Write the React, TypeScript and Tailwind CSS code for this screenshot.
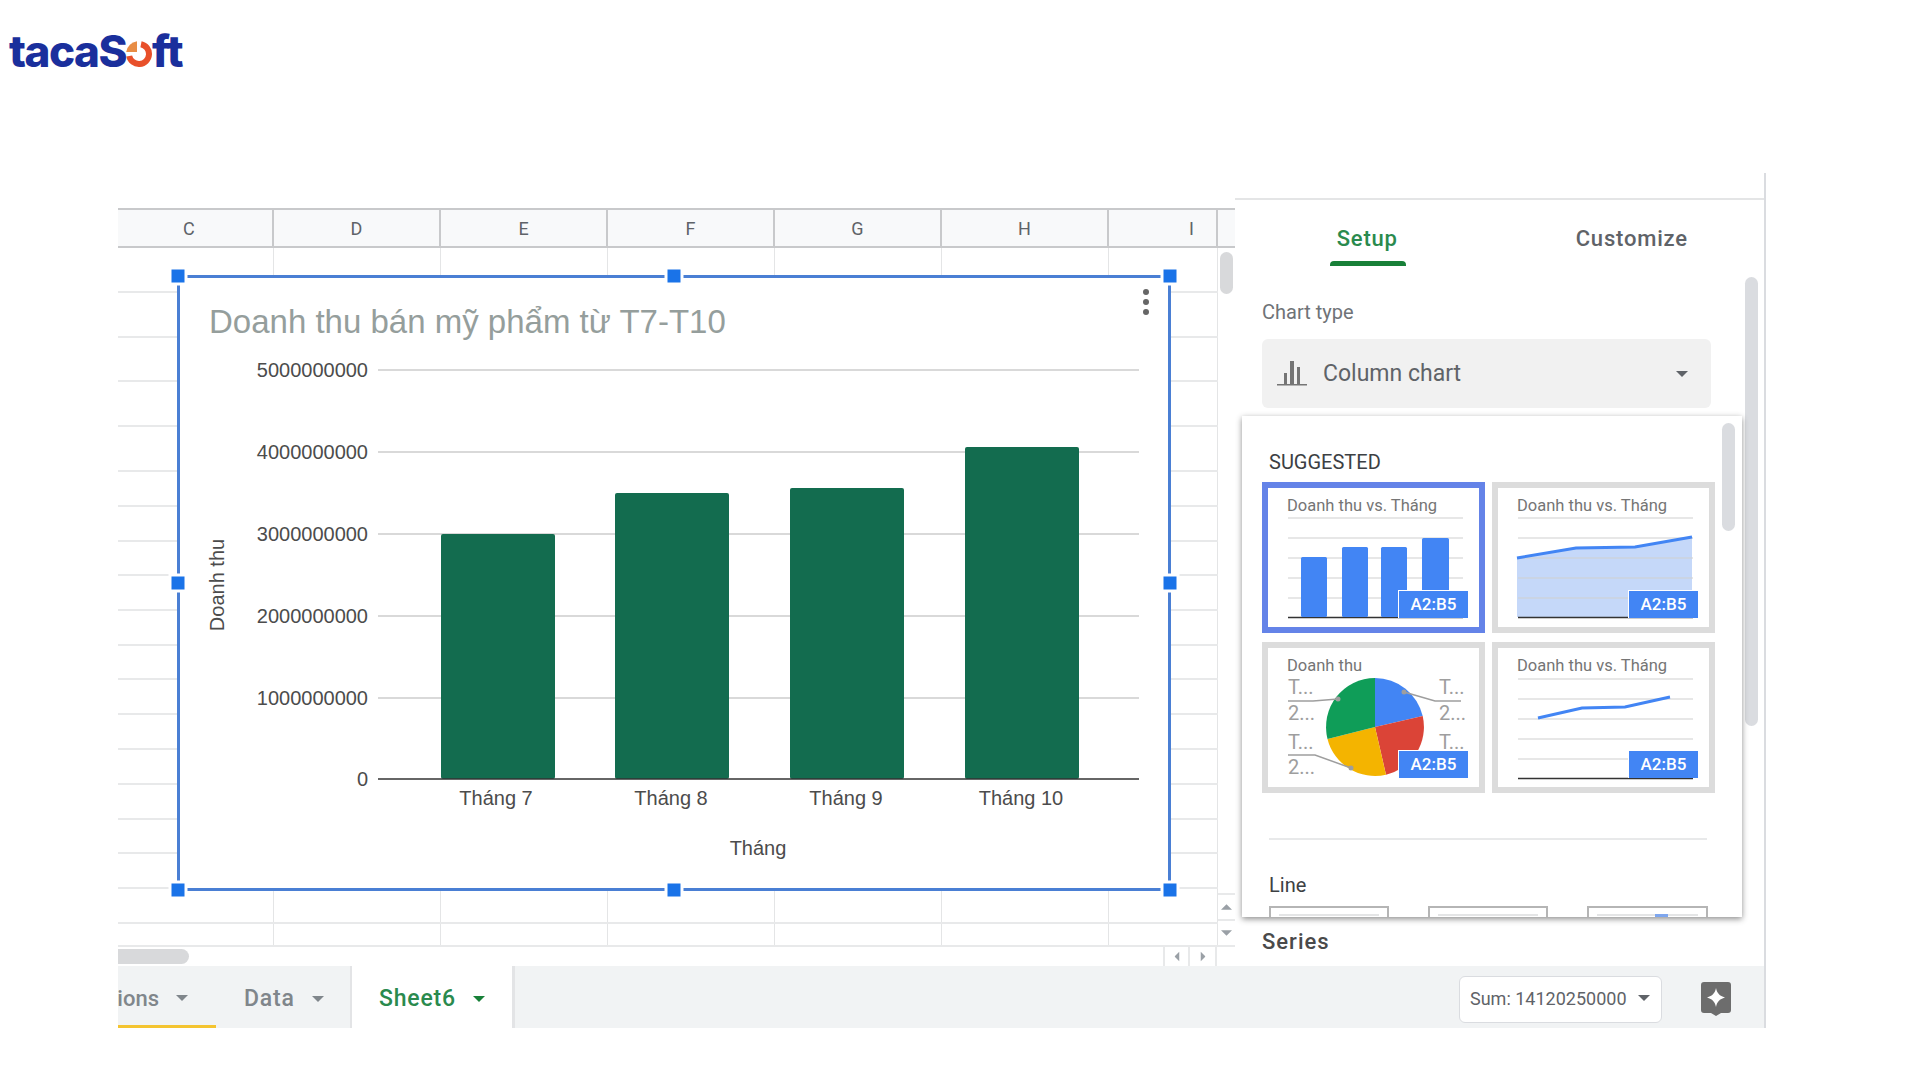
const columns = [
  { label: 'C', className: 'pl-[65px]' },
  { label: 'D', className: 'justify-center' },
  { label: 'E', className: 'justify-center' },
  { label: 'F', className: 'justify-center' },
  { label: 'G', className: 'justify-center' },
  { label: 'H', className: 'justify-center' },
  { label: 'I', className: 'pl-[80px]' },
];

const rowHeights = [
  'h-[45px]', 'h-[45px]', 'h-[44px]', 'h-[45px]', 'h-[45px]',
  'h-[35px]', 'h-[35px]', 'h-[34px]', 'h-[35px]', 'h-[35px]', 'h-[34px]', 'h-[35px]',
  'h-[35px]', 'h-[35px]', 'h-[35px]', 'h-[34px]', 'h-[35px]', 'h-[35px]', 'h-[23px]',
];

const gridCols = 'grid grid-cols-[156px_167px_167px_167px_167px_167px_109px]';

const handles = [
  'left-0 top-0', 'left-1/2 top-0', 'left-full top-0',
  'left-0 top-1/2', 'left-full top-1/2',
  'left-0 top-full', 'left-1/2 top-full', 'left-full top-full',
];

const axisTicks = [
  { y: 370, label: '5000000000' },
  { y: 452, label: '4000000000' },
  { y: 534, label: '3000000000' },
  { y: 616, label: '2000000000' },
  { y: 698, label: '1000000000' },
];

const bars = [
  { x: 441, top: 534, center: 496, label: 'Tháng 7' },
  { x: 615, top: 493, center: 671, label: 'Tháng 8' },
  { x: 790, top: 488, center: 846, label: 'Tháng 9' },
  { x: 965, top: 447, center: 1021, label: 'Tháng 10' },
];

function Caret({ className }: { className: string }) {
  return (
    <svg viewBox="0 0 12 6" className={className}>
      <path d="M0 0h12L6 6z" fill="currentColor" />
    </svg>
  );
}

function Logo() {
  return (
    <div className="flex items-baseline pl-[9px] pt-[21px] h-[173px] font-['Inter',sans-serif] font-extrabold text-[44px] leading-[60px] tracking-[-1.5px] text-[#1a2f9c]">
      <span>tacaS</span>
      <svg viewBox="0 0 26 26" className="w-[26px] h-[26px] shrink-0">
        <path d="M11 11V0.2A13 13 0 0 0 0.2 11Z" fill="#e88d45" />
        <path d="M15 3.2A10 10 0 1 1 3.2 15" fill="none" stroke="#e8502a" strokeWidth="6" />
      </svg>
      <span>ft</span>
    </div>
  );
}

function SalesChart() {
  return (
    <div className="absolute left-[59px] top-[27px] w-[994px] h-[616px] bg-white">
      <div className="absolute inset-0 border-[3px] border-[#4a7fd4]" />
      <svg viewBox="177 275 994 616" className="absolute inset-0 w-[994px] h-[616px] font-['Liberation_Sans',sans-serif]">
        <text x="209" y="333" fontSize="33" fill="#959e9c">Doanh thu bán mỹ phẩm từ T7-T10</text>
        {axisTicks.map((tick) => (
          <g key={tick.y}>
            <line x1="378" x2="1139" y1={tick.y} y2={tick.y} stroke="#cccccc" strokeWidth="1.5" />
            <text x="368" y={tick.y + 7} fontSize="20" fill="#4c4c4c" textAnchor="end">{tick.label}</text>
          </g>
        ))}
        {bars.map((bar) => (
          <g key={bar.label}>
            <rect x={bar.x} y={bar.top} width="114" height={779 - bar.top} rx="2" fill="#136c4f" />
            <text x={bar.center} y="805" fontSize="20" fill="#4c4c4c" textAnchor="middle">{bar.label}</text>
          </g>
        ))}
        <line x1="378" x2="1139" y1="779" y2="779" stroke="#333333" strokeWidth="1.5" />
        <text x="368" y="786" fontSize="20" fill="#4c4c4c" textAnchor="end">0</text>
        <text x="758" y="855" fontSize="20" fill="#4c4c4c" textAnchor="middle">Tháng</text>
        <text x="224" y="585" fontSize="20" fill="#4c4c4c" textAnchor="middle" transform="rotate(-90 224 585)">Doanh thu</text>
        <circle cx="1146" cy="292" r="3" fill="#666666" />
        <circle cx="1146" cy="302" r="3" fill="#666666" />
        <circle cx="1146" cy="312" r="3" fill="#666666" />
      </svg>
      <div className="absolute inset-[1px]">
        {handles.map((pos) => (
          <div key={pos} className={`absolute ${pos} -translate-x-1/2 -translate-y-1/2 w-[13px] h-[13px] bg-[#1a73e8] ring-[3px] ring-white`} />
        ))}
      </div>
    </div>
  );
}

function Sheet() {
  return (
    <div className="w-[1117px] pt-[35px] flex flex-col">
      <div className="flex h-[40px] border-y-2 border-[#c8c9cb] bg-[#f8f9fa] text-[18px] text-[#5f6368]">
        <div className={`${gridCols} w-[1100px]`}>
          {columns.map((col) => (
            <div key={col.label} className={`flex items-center border-r-2 border-[#c8c9cb] ${col.className}`}>
              {col.label}
            </div>
          ))}
        </div>
      </div>
      <div className="flex">
        <div className="relative w-[1100px]">
          {rowHeights.map((height, i) => (
            <div key={i} className={`${gridCols} ${height} border-b-2 border-[#e8e9ea]`}>
              {columns.map((col) => (
                <div key={col.label} className="border-r border-[#e4e5e6]" />
              ))}
            </div>
          ))}
          <SalesChart />
        </div>
        <div className="w-[17px] flex flex-col pt-[4px]">
          <div className="mx-[2px] h-[42px] rounded-full bg-[#d8d9db]" />
          <div className="flex-1" />
          <div className="h-[28px] flex items-center justify-center border-y-2 border-[#e8e9ea] text-[#9aa0a6]">
            <Caret className="w-[11px] h-[6px] rotate-180" />
          </div>
          <div className="h-[26px] flex items-center justify-center border-b-2 border-[#e8e9ea] text-[#9aa0a6]">
            <Caret className="w-[11px] h-[6px]" />
          </div>
        </div>
      </div>
      <div className="flex h-[19px] items-center">
        <div className="w-[71px] h-[15px] rounded-r-full bg-[#d8d9db]" />
        <div className="flex-1" />
        <div className="h-full w-[27px] flex items-center justify-center border-x-2 border-[#e8e9ea] text-[#9aa0a6]">
          <Caret className="w-[10px] h-[5px] rotate-90" />
        </div>
        <div className="h-full w-[27px] flex items-center justify-center border-r-2 border-[#e8e9ea] text-[#9aa0a6]">
          <Caret className="w-[10px] h-[5px] -rotate-90" />
        </div>
        <div className="w-[18px]" />
      </div>
    </div>
  );
}

function RangeBadge() {
  return (
    <div className="absolute right-[11px] bottom-[9px] w-[70px] h-[28px] flex items-center justify-center bg-[#4285f4] border-l border-t border-white text-[17px] font-medium text-white">
      A2:B5
    </div>
  );
}

function Thumb({ title, selected, children }: { title: string; selected?: boolean; children: React.ReactNode }) {
  return (
    <div className={`relative w-[223px] h-[151px] border-[6px] bg-white ${selected ? 'border-[#6483e8]' : 'border-[#dcdcdc]'}`}>
      <svg viewBox="6 6 211 139" className="absolute inset-0 w-[211px] h-[139px]">{children}</svg>
      <div className="relative pl-[19px] pt-[8px] text-[16.500px] leading-[20px] text-[#757575]">{title}</div>
      <RangeBadge />
    </div>
  );
}

function ThumbGrid({ top = 56 }: { top?: number }) {
  return (
    <>
      <line x1="26" x2="201" y1={top - 20} y2={top - 20} stroke="#cfcfcf" strokeWidth="1.2" />
      {[0, 20, 40, 60].map((d) => (
        <line key={d} x1="26" x2="201" y1={top + d} y2={top + d} stroke="#cfcfcf" strokeWidth="1.2" />
      ))}
      <line x1="26" x2="201" y1={top + 79.5} y2={top + 79.5} stroke="#333333" strokeWidth="1.5" />
    </>
  );
}

function ChartThumbs() {
  return (
    <div className="grid grid-cols-[223px_223px] gap-x-[7px] gap-y-[9px] ml-[20px]">
      <Thumb title="Doanh thu vs. Tháng" selected>
        <ThumbGrid />
        <rect x="39" y="75" width="26" height="60" rx="1.5" fill="#4285f4" />
        <rect x="80" y="65" width="26" height="70" rx="1.5" fill="#4285f4" />
        <rect x="119" y="65" width="26" height="70" rx="1.5" fill="#4285f4" />
        <rect x="160" y="56" width="27" height="79" rx="1.5" fill="#4285f4" />
      </Thumb>
      <Thumb title="Doanh thu vs. Tháng">
        <path d="M25 76L84 66L143 65L200 55V135H25Z" fill="#c5d8f9" />
        <ThumbGrid />
        <path d="M25 76L84 66L143 65L200 55" fill="none" stroke="#4285f4" strokeWidth="3" />
      </Thumb>
      <Thumb title="Doanh thu">
        <g className="font-['Roboto',sans-serif]" fontSize="20" fill="#9e9e9e">
          <text x="26" y="52">T...</text>
          <text x="26" y="78">2...</text>
          <text x="26" y="107">T...</text>
          <text x="26" y="132">2...</text>
          <text x="177" y="52">T...</text>
          <text x="177" y="78">2...</text>
          <text x="177" y="107">T...</text>
        </g>
        <path d="M113 85L113 36A49 49 0 0 1 160.7 74Z" fill="#4285f4" />
        <path d="M113 85L160.7 74A49 49 0 0 1 124 132.7Z" fill="#db4437" />
        <path d="M113 85L124 132.7A49 49 0 0 1 65.5 96.9Z" fill="#f4b400" />
        <path d="M113 85L65.5 96.9A49 49 0 0 1 113 36Z" fill="#0f9d58" />
        <g fill="none" stroke="#9e9e9e" strokeWidth="1.5">
          <path d="M26 59H51L76 57" />
          <path d="M26 113H53L89 126" />
          <path d="M199 59H173L142 50" />
        </g>
        <circle cx="76" cy="57" r="2.5" fill="#9e9e9e" />
        <circle cx="89" cy="126" r="2.5" fill="#9e9e9e" />
        <circle cx="142" cy="50" r="2.5" fill="#9e9e9e" />
      </Thumb>
      <Thumb title="Doanh thu vs. Tháng">
        <ThumbGrid top={57} />
        <path d="M46 76L90 66L133 65L178 55" fill="none" stroke="#4285f4" strokeWidth="3" />
      </Thumb>
    </div>
  );
}

function SuggestionPopup() {
  return (
    <div className="absolute left-[7px] top-[243px] w-[500px] h-[501px] bg-white overflow-hidden shadow-[0_2px_6px_rgba(0,0,0,0.45)]">
      <div className="absolute right-[7px] top-[7px] w-[13px] h-[108px] rounded-full bg-[#dadce0]" />
      <div className="ml-[27px] pt-[34px] h-[66px] text-[20px] leading-[24px] text-[#3c4043]">SUGGESTED</div>
      <ChartThumbs />
      <div className="ml-[27px] mt-[45px] w-[438px] border-t-2 border-[#e8e9ea]" />
      <div className="ml-[27px] mt-[33px] text-[20px] leading-[24px] text-[#3c4043]">Line</div>
      <div className="ml-[27px] mt-[9px] flex gap-[39px]">
        <div className="w-[120px] h-[30px] border-2 border-[#b5b5b5] px-[8px] pt-[6px]"><div className="border-t-2 border-[#e4e5e6]" /></div>
        <div className="w-[120px] h-[30px] border-2 border-[#b5b5b5] px-[8px] pt-[6px]"><div className="border-t-2 border-[#e4e5e6]" /></div>
        <div className="relative w-[121px] h-[30px] border-2 border-[#b5b5b5] px-[8px] pt-[6px]">
          <div className="border-t-2 border-[#e4e5e6]" />
          <div className="absolute left-[66px] top-[6px] w-[13px] h-[4px] bg-[#7ea6ee]" />
        </div>
      </div>
    </div>
  );
}

function SidePanel() {
  return (
    <div className="relative w-[530px]">
      <div className="h-[27px] border-b-2 border-[#e4e5e6]" />
      <div className="grid grid-cols-2 h-[66px] pb-[5px] font-medium text-[22px] leading-[28px] tracking-[0.8px]">
        <div className="relative flex justify-center pt-[25px] text-[#2a8a4e]">
          Setup
          <div className="absolute left-[95px] bottom-[-5px] w-[76px] h-[5px] rounded-t-[4px] bg-[#188038]" />
        </div>
        <div className="flex justify-center pt-[25px] text-[#5f6368]">Customize</div>
      </div>
      <div className="ml-[27px] mt-[34px] text-[20px] leading-[24px] text-[#6f7377]">Chart type</div>
      <div className="ml-[27px] mt-[15px] w-[449px] h-[69px] flex items-center pl-[15px] pr-[23px] rounded-[6px] bg-[#f1f1f1]">
        <svg viewBox="0 0 30 25" className="w-[30px] h-[25px] shrink-0">
          <g fill="#757575">
            <rect x="7" y="12" width="3" height="12" />
            <rect x="13" y="0" width="4" height="24" />
            <rect x="20" y="6" width="3" height="18" />
            <rect x="0" y="23" width="30" height="1.5" />
          </g>
        </svg>
        <span className="ml-[16px] text-[23px] leading-[28px] text-[#5f6368]">Column chart</span>
        <Caret className="ml-auto w-[12px] h-[6px] text-[#5f6368]" />
      </div>
      <div className="ml-[27px] mt-[521px] font-medium text-[22px] leading-[26px] tracking-[1px] text-[#4a4a4a]">Series</div>
      <div className="absolute left-[510px] top-[104px] w-[13px] h-[449px] rounded-full bg-[#dadce0]" />
      <SuggestionPopup />
    </div>
  );
}

function BottomBar() {
  return (
    <div className="flex h-[62px] bg-[#f1f3f4] font-medium text-[23px] tracking-[0.8px] text-[#80868b]">
      <div className="w-[98px] flex items-center justify-end pt-[5px] pr-[28px] gap-[17px] border-b-[3px] border-[#f4c430] overflow-hidden text-[22px] tracking-normal">
        <span>ions</span>
        <Caret className="w-[12px] h-[6px] shrink-0" />
      </div>
      <div className="w-[136px] flex items-center pt-[4px] pl-[28px] gap-[17px] border-r-2 border-[#e3e4e6]">
        <span>Data</span>
        <Caret className="w-[12px] h-[6px] shrink-0" />
      </div>
      <div className="w-[163px] flex items-center pt-[4px] pl-[27px] gap-[17px] bg-white text-[#2a8a4e] border-r-[3px] border-[#e3e4e6]">
        <span>Sheet6</span>
        <Caret className="w-[12px] h-[6px] shrink-0 text-[#188038]" />
      </div>
      <div className="ml-auto mr-[33px] flex items-center h-full pt-[4px]">
        <div className="w-[203px] h-[47px] flex items-center pl-[10px] pb-[2px] rounded-[6px] bg-white border border-[#dadce0] font-normal text-[18px] tracking-normal text-[#5f6368]">
          <span>Sum: 14120250000</span>
          <Caret className="ml-[11px] w-[12px] h-[6px] shrink-0" />
        </div>
        <svg viewBox="0 0 30 34" className="ml-[39px] w-[30px] h-[34px]">
          <path d="M3 0h24a3 3 0 0 1 3 3v25a3 3 0 0 1-3 3h-7l-5 3-5-3H3a3 3 0 0 1-3-3V3a3 3 0 0 1 3-3z" fill="#6d6d6d" />
          <path d="M15 6c1 5 3.500 8 9 9.500-5.500 1.500-8 4.500-9 9.500-1-5-3.500-8-9-9.500 5.500-1.500 8-4.500 9-9.500z" fill="#ffffff" />
        </svg>
      </div>
    </div>
  );
}

export default function App() {
  return (
    <div className="w-[1920px] h-[1080px] bg-white overflow-hidden font-['Roboto',sans-serif]">
      <Logo />
      <div className="ml-[118px] w-[1648px] border-r-2 border-[#dadce0]">
        <div className="flex h-[793px]">
          <Sheet />
          <SidePanel />
        </div>
        <BottomBar />
      </div>
    </div>
  );
}
